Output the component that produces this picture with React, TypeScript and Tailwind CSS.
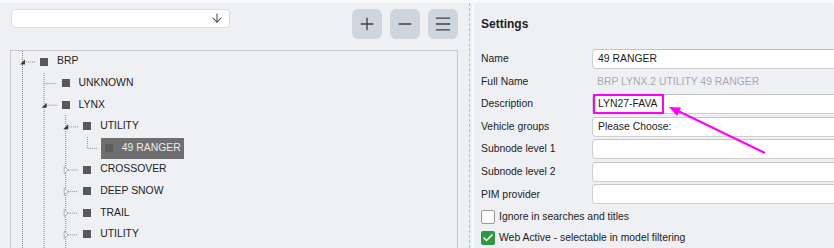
import { ArrowDown, Plus, Minus, Menu, Check } from "lucide-react";

type Node = { label: string; level: number; selected?: boolean };

const nodes: Node[] = [
  { label: "BRP", level: 0 },
  { label: "UNKNOWN", level: 1 },
  { label: "LYNX", level: 1 },
  { label: "UTILITY", level: 2 },
  { label: "49 RANGER", level: 3, selected: true },
  { label: "CROSSOVER", level: 2 },
  { label: "DEEP SNOW", level: 2 },
  { label: "TRAIL", level: 2 },
  { label: "UTILITY", level: 2 },
];

const ROW = 21.6;
const IND = 21.6;

// y centre of a row inside the tree box
const cy = (i: number) => 10.5 + ROW * i;
// x of the expander column for a level
const cx = (l: number) => 11 + IND * l;

function TreeLines() {
  const dot = { stroke: "#8a8a8a", strokeWidth: 1, strokeDasharray: "1 1" };
  const open = [5, 6, 7, 8];
  return (
    <svg className="absolute left-0 top-0 pointer-events-none" width="447" height="200">
      {/* vertical guides */}
      <line x1={cx(0) + 0.5} y1={0} x2={cx(0) + 0.5} y2={200} {...dot} />
      <line x1={cx(1) + 0.5} y1={22} x2={cx(1) + 0.5} y2={200} {...dot} />
      <line x1={cx(2) + 0.5} y1={64} x2={cx(2) + 0.5} y2={200} {...dot} />
      <line x1={cx(3) + 0.5} y1={86} x2={cx(3) + 0.5} y2={cy(4) + 0.5} {...dot} />

      {/* horizontal stubs */}
      <line x1={cx(0) + 2} y1={cy(0) + 0.5} x2={cx(0) + 13} y2={cy(0) + 0.5} {...dot} />
      <line x1={cx(1) + 1} y1={cy(1) + 0.5} x2={cx(1) + 13} y2={cy(1) + 0.5} {...dot} />
      <line x1={cx(1) + 2} y1={cy(2) + 0.5} x2={cx(1) + 13} y2={cy(2) + 0.5} {...dot} />
      <line x1={cx(2) + 2} y1={cy(3) + 0.5} x2={cx(2) + 13} y2={cy(3) + 0.5} {...dot} />
      <line x1={cx(3) + 1} y1={cy(4) + 0.5} x2={cx(3) + 11} y2={cy(4) + 0.5} {...dot} />
      {open.map((i) => (
        <line key={i} x1={cx(2) + 3} y1={cy(i) + 0.5} x2={cx(2) + 13} y2={cy(i) + 0.5} {...dot} />
      ))}

      {/* expanded markers */}
      {[
        [0, 0],
        [1, 2],
        [2, 3],
      ].map(([l, i]) => {
        const x = cx(l);
        const y = cy(i);
        return (
          <polygon
            key={`e${i}`}
            points={`${x - 2},${y + 3} ${x + 3},${y + 3} ${x + 3},${y - 2}`}
            fill="#3a3a3a"
          />
        );
      })}

      {/* collapsed markers */}
      {open.map((i) => {
        const x = cx(2);
        const y = cy(i);
        return (
          <polygon
            key={`c${i}`}
            points={`${x - 1},${y - 3} ${x + 3},${y + 0.5} ${x - 1},${y + 4}`}
            fill="#ffffff"
            stroke="#9a9a9a"
            strokeWidth="0.8"
          />
        );
      })}
    </svg>
  );
}

function Tree() {
  return (
    <div className="relative mt-[11px] flex-1 border-l border-t border-r border-[#c9c9cc]">
      <TreeLines />
      <div className="flex flex-col">
        {nodes.map((n, i) => (
          <div
            key={i}
            className="flex h-[21.6px] items-center"
            style={{ paddingLeft: 25 + IND * n.level }}
          >
            <div
              className={
                n.selected
                  ? "flex h-[21px] items-center gap-[9px] bg-[#6f6f6f] pl-[4px] pr-[3px] text-[#ececec]"
                  : "flex h-[21px] items-center gap-[9px] pl-[4px] pr-[3px] text-[#222]"
              }
            >
              <span
                className={
                  n.selected
                    ? "block h-[8px] w-[8px] bg-[#5e5e5e]"
                    : "block h-[8px] w-[8px] bg-[#585858]"
                }
              />
              <span className="text-[10.4px] leading-none">{n.label}</span>
            </div>
          </div>
        ))}
      </div>
    </div>
  );
}

function ToolButton({ children }: { children: React.ReactNode }) {
  return (
    <button className="flex h-[30px] w-[30px] items-center justify-center rounded-[6px] bg-[#cfd5dd] text-[#3b4250]">
      {children}
    </button>
  );
}

function Field({ label, children }: { label: string; children?: React.ReactNode }) {
  return (
    <div className="flex h-[22.6px] items-start">
      <div className="flex h-[20px] w-[111px] shrink-0 items-center text-[10.4px] text-[#222]">
        {label}
      </div>
      {children}
    </div>
  );
}

function Input({ value, boxed }: { value?: string; boxed?: boolean }) {
  return (
    <div className="relative flex h-[20px] w-[270px] shrink-0 items-center rounded-l-[4px] border border-[#cfcfd2] border-t-[#c4c4c7] bg-white pl-[5px] text-[10.4px] text-[#1d1d1d]">
      {value}
      {boxed && (
        <span className="absolute left-0 top-[-1px] h-[20px] w-[71px] border-2 border-[#ff00ff]" />
      )}
    </div>
  );
}

function Checkbox({ checked, label }: { checked?: boolean; label: string }) {
  return (
    <div className="flex h-[21px] items-center gap-[4px]">
      {checked ? (
        <span className="flex h-[14px] w-[14px] items-center justify-center rounded-[2px] bg-[#2b9a3c]">
          <Check size={12} strokeWidth={3.5} color="#ffffff" />
        </span>
      ) : (
        <span className="h-[14px] w-[14px] rounded-[2px] border border-[#9c9c9c] bg-white" />
      )}
      <span className="text-[10.4px] text-[#222]">{label}</span>
    </div>
  );
}

export default function App() {
  return (
    <div
      className="relative flex h-[248px] w-[834px] flex-col overflow-hidden bg-[#eff0f4]"
      style={{ fontFamily: '"Liberation Sans", Arial, sans-serif' }}
    >
      <div className="h-[3px] bg-[#f8f9fb]" />
      <div className="flex flex-1">
        {/* left panel */}
        <div className="flex w-[469px] shrink-0 flex-col pl-[10px] pr-[11px] pt-[6px]">
          <div className="flex items-start">
            <div className="ml-px mt-0 flex h-[19px] w-[219px] items-center justify-end rounded-[4px] border border-[#dcdde1] bg-white pr-[5px]">
              <ArrowDown size={14} strokeWidth={1.8} color="#4a4a4a" />
            </div>
            <div className="ml-auto flex gap-[8px]">
              <ToolButton>
                <Plus size={20} strokeWidth={1.6} />
              </ToolButton>
              <ToolButton>
                <Minus size={20} strokeWidth={1.6} />
              </ToolButton>
              <ToolButton>
                <Menu size={20} strokeWidth={1.6} />
              </ToolButton>
            </div>
          </div>
          <Tree />
        </div>

        {/* divider */}
        <div className="w-[3px] shrink-0 border-l border-dashed border-[#bcbcc0]" />

        {/* right panel */}
        <div className="flex flex-1 flex-col border-l-2 border-[#f8f9fb] pl-[7px] pt-[12px]">
          <div className="h-[34px] text-[12px] font-bold text-[#1d1d1d]">Settings</div>
          <Field label="Name">
            <Input value="49 RANGER" />
          </Field>
          <Field label="Full Name">
            <div className="flex h-[20px] items-center pl-[5px] text-[10.4px] text-[#a9a9ad]">
              BRP LYNX.2 UTILITY 49 RANGER
            </div>
          </Field>
          <Field label="Description">
            <Input value="LYN27-FAVA" boxed />
          </Field>
          <Field label="Vehicle groups">
            <Input value="Please Choose:" />
          </Field>
          <Field label="Subnode level 1">
            <Input />
          </Field>
          <Field label="Subnode level 2">
            <Input />
          </Field>
          <Field label="PIM provider">
            <Input />
          </Field>
          <div className="-mt-[1px]">
            <Checkbox label="Ignore in searches and titles" />
            <Checkbox checked label="Web Active - selectable in model filtering" />
          </div>
        </div>
      </div>

      {/* annotation arrow */}
      <svg className="pointer-events-none absolute left-0 top-0" width="834" height="248">
        <line x1="765" y1="153" x2="676" y2="110" stroke="#ff00ff" strokeWidth="2" />
        <polygon points="669,107 677,116 681,107.5" fill="#ff00ff" />
      </svg>
    </div>
  );
}
